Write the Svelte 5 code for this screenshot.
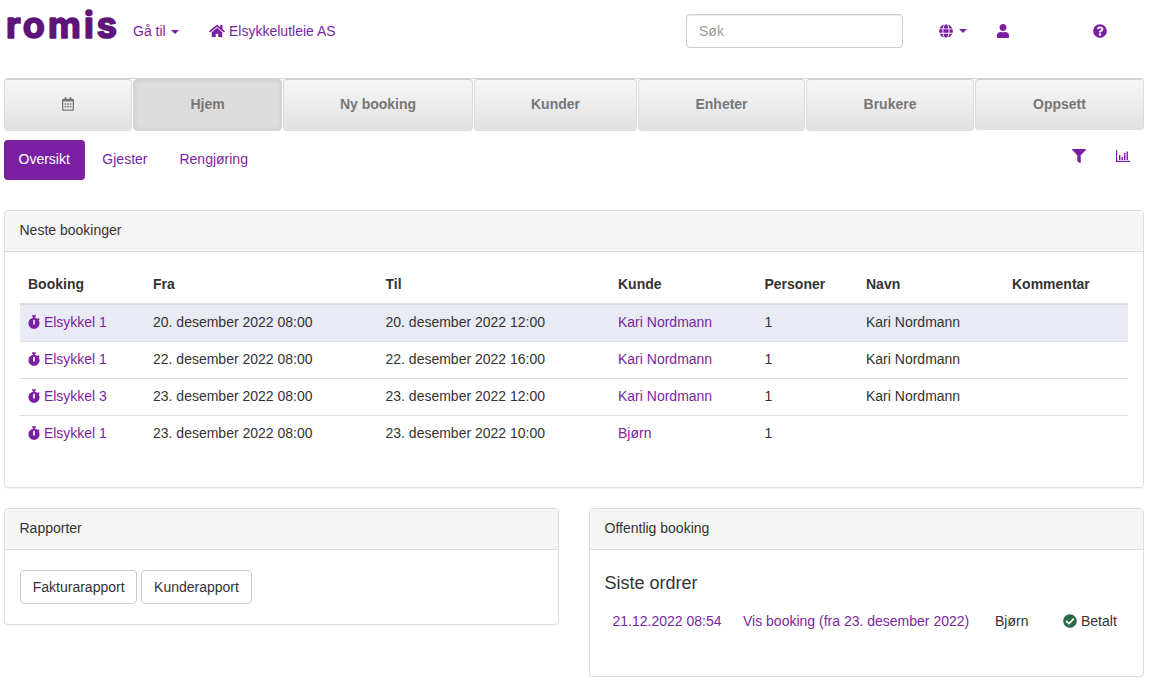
<script>
    const tabs = [
        { label: '', w: 128, calendar: true },
        { label: 'Hjem', w: 149, active: true },
        { label: 'Ny booking', w: 190 },
        { label: 'Kunder', w: 163 },
        { label: 'Enheter', w: 167 },
        { label: 'Brukere', w: 168 },
        { label: 'Oppsett', w: 169 }
    ];

    const bookings = [
        { unit: 'Elsykkel 1', from: '20. desember 2022 08:00', to: '20. desember 2022 12:00', customer: 'Kari Nordmann', name: 'Kari Nordmann', current: true },
        { unit: 'Elsykkel 1', from: '22. desember 2022 08:00', to: '22. desember 2022 16:00', customer: 'Kari Nordmann', name: 'Kari Nordmann' },
        { unit: 'Elsykkel 3', from: '23. desember 2022 08:00', to: '23. desember 2022 12:00', customer: 'Kari Nordmann', name: 'Kari Nordmann' },
        { unit: 'Elsykkel 1', from: '23. desember 2022 08:00', to: '23. desember 2022 10:00', customer: 'Bjørn', name: '' }
    ];

    const columns = [
        ['Booking', 125], ['Fra', 232.5], ['Til', 232.5], ['Kunde', 146.5],
        ['Personer', 101.5], ['Navn', 146], ['Kommentar', 124]
    ];
</script>

<header class="navbar">
    <svg class="logo" viewBox="0 0 128 50">
        <text x="1" y="38" textLength="111" lengthAdjust="spacing">romis</text>
    </svg>
    <a class="goto">Gå til <span class="caret"></span></a>
    <a class="company">
        <svg class="home" viewBox="0 0 576 512"><path d="M280.37 148.26L96 300.11V464a16 16 0 0 0 16 16l112.06-.29a16 16 0 0 0 15.92-16V368a16 16 0 0 1 16-16h64a16 16 0 0 1 16 16v95.64a16 16 0 0 0 16 16.05L464 480a16 16 0 0 0 16-16V300L295.67 148.26a12.19 12.19 0 0 0-15.3 0zM571.6 251.47L488 182.56V44.05a12 12 0 0 0-12-12h-56a12 12 0 0 0-12 12v72.61L318.47 43a48 48 0 0 0-61 0L4.34 251.47a12 12 0 0 0-1.6 16.9l25.5 31A12 12 0 0 0 45.15 301l235.22-193.74a12.19 12.19 0 0 1 15.3 0L530.9 301a12 12 0 0 0 16.9-1.6l25.5-31a12 12 0 0 0-1.7-16.93z"/></svg>
        Elsykkelutleie AS
    </a>
    <input class="search" placeholder="Søk" />
    <a class="lang">
        <svg class="nav-icon" viewBox="0 0 496 512"><path d="M336.5 160C322 70.7 287.8 8 248 8s-74 62.7-88.5 152h177zM152 256c0 22.2 1.2 43.5 3.3 64h185.3c2.1-20.5 3.3-41.8 3.3-64s-1.2-43.5-3.3-64H155.3c-2.1 20.5-3.3 41.8-3.3 64zm324.7-96c-28.6-67.9-86.5-120.4-158-141.6 24.4 33.8 41.2 84.7 50 141.6h108zM177.2 18.4C105.8 39.6 47.8 92.1 19.3 160h108c8.7-56.9 25.5-107.8 49.9-141.6zM487.4 192H372.7c2.1 21 3.3 42.5 3.3 64s-1.2 43-3.3 64h114.6c5.5-20.5 8.6-41.8 8.6-64s-3.1-43.5-8.5-64zM120 256c0-21.5 1.2-43 3.3-64H8.6C3.2 212.5 0 233.8 0 256s3.2 43.5 8.6 64h114.6c-2-21-3.2-42.5-3.2-64zm39.5 96c14.5 89.3 48.7 152 88.5 152s74-62.7 88.5-152h-177zm159.3 141.6c71.4-21.2 129.4-73.7 158-141.6h-108c-8.8 56.9-25.6 107.8-50 141.6zM19.3 352c28.6 67.9 86.5 120.4 158 141.6-24.4-33.8-41.2-84.7-50-141.6h-108z"/></svg>
        <span class="caret"></span>
    </a>
    <a class="user">
        <svg class="nav-icon" viewBox="0 0 448 512"><path d="M224 256c70.7 0 128-57.3 128-128S294.7 0 224 0 96 57.3 96 128s57.3 128 128 128zm89.6 32h-16.7c-22.2 10.2-46.9 16-72.9 16s-50.6-5.8-72.9-16h-16.7C60.2 288 0 348.2 0 422.4V464c0 26.5 21.5 48 48 48h352c26.5 0 48-21.5 48-48v-41.6c0-74.2-60.2-134.4-134.4-134.4z"/></svg>
    </a>
    <a class="help">
        <svg class="nav-icon" viewBox="0 0 512 512"><path d="M504 256c0 136.997-111.043 248-248 248S8 392.997 8 256C8 119.083 119.043 8 256 8s248 111.083 248 248zM262.655 90c-54.497 0-89.255 22.957-116.549 63.758-3.536 5.286-2.353 12.415 2.715 16.258l34.699 26.31c5.205 3.947 12.621 3.008 16.665-2.122 17.864-22.658 30.113-35.797 57.303-35.797 20.429 0 45.698 13.148 45.698 32.958 0 14.976-12.363 22.667-32.534 33.976C247.128 238.528 216 254.941 216 296v4c0 6.627 5.373 12 12 12h56c6.627 0 12-5.373 12-12v-1.333c0-28.462 83.186-29.647 83.186-106.667 0-58.002-60.165-102-116.531-102zM256 338c-25.365 0-46 20.635-46 46 0 25.364 20.635 46 46 46s46-20.636 46-46c0-25.365-20.635-46-46-46z"/></svg>
    </a>
</header>

<main class="page">
    <nav class="tabs">
        {#each tabs as tab}
            <a class="tab" class:active={tab.active} style="width: {tab.w}px">
                {#if tab.calendar}
                    <svg class="calendar" viewBox="0 0 448 512"><path d="M148 288h-40c-6.6 0-12-5.4-12-12v-40c0-6.6 5.4-12 12-12h40c6.6 0 12 5.4 12 12v40c0 6.6-5.4 12-12 12zm108-12v-40c0-6.6-5.4-12-12-12h-40c-6.6 0-12 5.4-12 12v40c0 6.6 5.4 12 12 12h40c6.6 0 12-5.4 12-12zm96 0v-40c0-6.6-5.4-12-12-12h-40c-6.6 0-12 5.4-12 12v40c0 6.6 5.4 12 12 12h40c6.6 0 12-5.4 12-12zm-96 96v-40c0-6.6-5.4-12-12-12h-40c-6.6 0-12 5.4-12 12v40c0 6.6 5.4 12 12 12h40c6.6 0 12-5.4 12-12zm-96 0v-40c0-6.6-5.4-12-12-12h-40c-6.6 0-12 5.4-12 12v40c0 6.6 5.4 12 12 12h40c6.6 0 12-5.4 12-12zm192 0v-40c0-6.6-5.4-12-12-12h-40c-6.6 0-12 5.4-12 12v40c0 6.6 5.4 12 12 12h40c6.6 0 12-5.4 12-12zm96-260v352c0 26.5-21.5 48-48 48H48c-26.5 0-48-21.5-48-48V112c0-26.5 21.5-48 48-48h48V12c0-6.6 5.4-12 12-12h40c6.6 0 12 5.4 12 12v52h128V12c0-6.6 5.4-12 12-12h40c6.6 0 12 5.4 12 12v52h48c26.5 0 48 21.5 48 48zm-48 346V160H48v298c0 3.3 2.7 6 6 6h340c3.3 0 6-2.7 6-6z"/></svg>
                {:else}
                    {tab.label}
                {/if}
            </a>
        {/each}
    </nav>

    <div class="subnav">
        <a class="pill active">Oversikt</a>
        <a class="pill">Gjester</a>
        <a class="pill">Rengjøring</a>
        <div class="tools">
            <svg class="filter" viewBox="0 0 512 512"><path d="M487.976 0H24.028C2.71 0-8.047 25.866 7.058 40.971L192 225.941V432c0 7.831 3.821 15.17 10.237 19.662l80 55.98C298.02 518.69 320 507.493 320 487.98V225.941l184.947-184.97C520.021 25.896 509.338 0 487.976 0z"/></svg>
            <svg class="chart" viewBox="0 0 14 12">
                <rect x="0" y="0" width="1.2" height="12"/>
                <rect x="0" y="10.8" width="14" height="1.2"/>
                <rect x="3" y="5" width="1.4" height="5"/>
                <rect x="5.5" y="7" width="1.4" height="3"/>
                <rect x="8" y="3" width="1.4" height="7"/>
                <rect x="10.5" y="1.5" width="1.4" height="8.5"/>
            </svg>
        </div>
    </div>

    <section class="panel">
        <h3 class="panel-heading">Neste bookinger</h3>
        <div class="panel-body">
            <table>
                <colgroup>
                    {#each columns as col}
                        <col style="width: {col[1]}px" />
                    {/each}
                </colgroup>
                <thead>
                    <tr>
                        {#each columns as col}
                            <th>{col[0]}</th>
                        {/each}
                    </tr>
                </thead>
                <tbody>
                    {#each bookings as b}
                        <tr class:current={b.current}>
                            <td>
                                <a>
                                    <svg class="stopwatch" viewBox="0 0 448 512"><path d="M432 304c0 114.9-93.1 208-208 208S16 418.9 16 304c0-104 76.3-190.2 176-205.5V64h-28c-6.6 0-12-5.4-12-12V12c0-6.6 5.4-12 12-12h120c6.6 0 12 5.4 12 12v40c0 6.6-5.4 12-12 12h-28v34.5c37.5 5.8 71.7 21.6 99.7 44.6l27.5-27.5c4.7-4.7 12.3-4.7 17 0l28.3 28.3c4.7 4.7 4.7 12.3 0 17l-29.4 29.4-.6.6C419.7 223.3 432 262.2 432 304zm-176 36V188.5c0-6.6-5.4-12-12-12h-40c-6.6 0-12 5.4-12 12V340c0 6.6 5.4 12 12 12h40c6.6 0 12-5.4 12-12z"/></svg>
                                    {b.unit}
                                </a>
                            </td>
                            <td>{b.from}</td>
                            <td>{b.to}</td>
                            <td><a>{b.customer}</a></td>
                            <td>1</td>
                            <td>{b.name}</td>
                            <td></td>
                        </tr>
                    {/each}
                </tbody>
            </table>
        </div>
    </section>

    <div class="columns">
        <section class="panel">
            <h3 class="panel-heading">Rapporter</h3>
            <div class="panel-body buttons">
                <button>Fakturarapport</button>
                <button>Kunderapport</button>
            </div>
        </section>
        <section class="panel">
            <h3 class="panel-heading">Offentlig booking</h3>
            <div class="panel-body orders">
                <h4>Siste ordrer</h4>
                <div class="order">
                    <a class="when">21.12.2022 08:54</a>
                    <a class="what">Vis booking (fra 23. desember 2022)</a>
                    <span class="who">Bjørn</span>
                    <span class="status">
                        <svg class="check" viewBox="0 0 512 512"><path d="M504 256c0 136.967-111.033 248-248 248S8 392.967 8 256 119.033 8 256 8s248 111.033 248 248zM227.314 387.314l184-184c6.248-6.248 6.248-16.379 0-22.627l-22.627-22.627c-6.248-6.249-16.379-6.249-22.628 0L216 308.118l-70.059-70.059c-6.248-6.248-16.379-6.248-22.628 0l-22.627 22.627c-6.248 6.248-6.248 16.379 0 22.627l104 104c6.249 6.249 16.379 6.249 22.628.001z"/></svg>
                        Betalt
                    </span>
                </div>
            </div>
        </section>
    </div>
</main>

<style>
    :global(body) {
        font-family: 'Liberation Sans', Arial, sans-serif;
        font-size: 14px;
        line-height: 20px;
        color: #333;
        background: #fff;
    }

    a {
        color: #7b1fa2;
        cursor: pointer;
    }

    svg {
        fill: currentColor;
    }

    .navbar {
        display: flex;
        align-items: center;
        height: 78px;
        padding-bottom: 16px;
        box-sizing: border-box;
        padding-left: 5px;
    }

    .logo {
        flex: none;
        align-self: flex-start;
        width: 128px;
        height: 50px;
    }

    .logo text {
        font-family: Inter, sans-serif;
        font-weight: 700;
        font-size: 36px;
        fill: #5f1478;
        stroke: #5f1478;
        stroke-width: 1.6px;
        stroke-linejoin: round;
    }

    .goto {
        width: 76px;
    }

    .caret {
        display: inline-block;
        width: 0;
        height: 0;
        margin-left: 1px;
        vertical-align: middle;
        border-top: 4px solid;
        border-left: 4px solid transparent;
        border-right: 4px solid transparent;
    }

    .company {
        display: flex;
        align-items: center;
        gap: 4px;
        width: 477px;
    }

    .home {
        width: 16px;
        height: 14px;
    }

    .search {
        width: 217px;
        height: 34px;
        box-sizing: border-box;
        padding: 6px 12px;
        border: 1px solid #ccc;
        border-radius: 4px;
        font: inherit;
        color: #555;
        box-shadow: inset 0 1px 1px rgba(0, 0, 0, 0.075);
    }

    .search::placeholder {
        color: #999;
    }

    .nav-icon {
        display: block;
        width: 14px;
        height: 14px;
    }

    .lang {
        display: flex;
        align-items: center;
        gap: 5px;
        margin-left: 36px;
        width: 57px;
    }

    .user {
        width: 97px;
    }

    .page {
        padding: 0 7px 0 4px;
    }

    .tabs {
        display: flex;
        gap: 1px;
        height: 53px;
        box-sizing: border-box;
        border-top: 1px solid #d2d2d2;
        border-radius: 4px;
    }

    .tab {
        display: flex;
        align-items: center;
        justify-content: center;
        box-sizing: border-box;
        padding-bottom: 2px;
        border: 1px solid #dcdcdc;
        border-top-color: #d2d2d2;
        border-radius: 4px;
        background: linear-gradient(#f6f6f6, #e2e2e2);
        font-weight: bold;
        color: #777;
    }

    .tab:last-child {
        height: 51px;
        border-bottom: 0;
    }

    .tab.active {
        background: #dcdcdc;
        border-color: #d4d4d4;
        box-shadow: inset 0 0 5px rgba(0, 0, 0, 0.08);
    }

    .calendar {
        width: 12px;
        height: 14px;
    }

    .subnav {
        display: flex;
        align-items: flex-start;
        margin-top: 9px;
        height: 70px;
    }

    .pill {
        height: 40px;
        box-sizing: border-box;
        padding: 9px 15px;
        margin-right: 2px;
        border-radius: 4px;
    }

    .pill.active {
        padding-left: 14.5px;
        padding-right: 15.5px;
        background: #7b1fa2;
        color: #fff;
    }

    .tools {
        display: flex;
        align-items: center;
        gap: 30px;
        margin-left: auto;
        margin-right: 14px;
        padding-top: 9px;
    }

    .filter {
        width: 14px;
        height: 14px;
        color: #7b1fa2;
    }

    .chart {
        width: 14px;
        height: 12px;
        color: #7b1fa2;
    }

    .panel {
        border: 1px solid #ddd;
        border-radius: 4px;
        box-shadow: 0 1px 1px rgba(0, 0, 0, 0.05);
        background: #fff;
    }

    .panel-heading {
        margin: 0;
        padding: 9px 15px 11px 14.5px;
        font-size: 14px;
        font-weight: normal;
        line-height: 20px;
        background: #f5f5f5;
        border-bottom: 1px solid #ddd;
        border-radius: 3px 3px 0 0;
    }

    .panel-body {
        padding: 15px;
    }

    table {
        width: 100%;
        table-layout: fixed;
        border-collapse: collapse;
        margin-bottom: 20px;
    }

    th {
        text-align: left;
        padding: 7px 8px 9px;
        border-bottom: 2px solid #ddd;
    }

    td {
        padding: 7px 8px 9px;
        border-top: 1px solid #ddd;
    }

    tbody tr:first-child td {
        border-top: 0;
    }

    tr.current {
        background: #e8eaf4;
    }

    .stopwatch {
        width: 12px;
        height: 14px;
        vertical-align: -2px;
    }

    .columns {
        display: grid;
        grid-template-columns: 555px 555px;
        justify-content: space-between;
        align-items: start;
        margin-top: 20px;
    }

    .buttons {
        display: flex;
        gap: 4px;
        padding-top: 20px;
        padding-bottom: 20px;
    }

    button {
        height: 34px;
        padding: 6px 11.75px;
        font: inherit;
        color: #333;
        background: #fff;
        border: 1px solid #ccc;
        border-radius: 4px;
    }

    .orders {
        height: 126px;
        box-sizing: border-box;
        padding-left: 14.5px;
    }

    h4 {
        margin: 8px 0 0;
        font-size: 18px;
        font-weight: normal;
        line-height: 20px;
    }

    .order {
        display: flex;
        margin-top: 18px;
        padding-left: 8px;
    }

    .when {
        width: 130.5px;
    }

    .what {
        width: 252px;
    }

    .who {
        width: 68px;
    }

    .status {
        display: flex;
        align-items: center;
        gap: 4px;
    }

    .check {
        width: 14px;
        height: 14px;
        color: #2b6a4d;
    }
</style>
